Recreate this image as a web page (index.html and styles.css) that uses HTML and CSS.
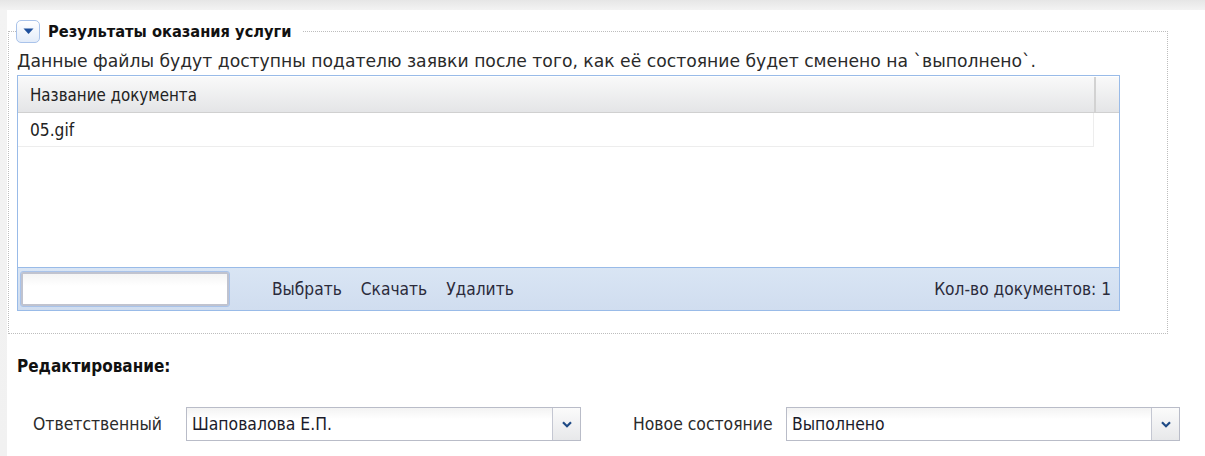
FILE: index.html
```html
<!DOCTYPE html>
<html lang="ru">
<head>
<meta charset="utf-8">
<title>Результаты оказания услуги</title>
<link rel="stylesheet" href="styles.css">
</head>
<body>
<div class="page">
  <fieldset class="results">
    <legend class="results-legend">
      <span class="toggle" aria-hidden="true">
        <svg width="11" height="7" viewBox="0 0 11 7"><path d="M0.5 0.5 H10.5 L5.5 6 Z" fill="#1d4f9c"/></svg>
      </span>
      <span class="legend-title">Результаты оказания услуги</span>
    </legend>
    <p class="note">Данные файлы будут доступны подателю заявки после того, как её состояние будет сменено на `выполнено`.</p>
    <div class="grid">
      <div class="grid-head">
        <div class="grid-col">Название документа</div>
        <div class="grid-filler"></div>
      </div>
      <div class="grid-body">
        <div class="grid-row">05.gif</div>
      </div>
      <div class="grid-toolbar">
        <input class="tb-input" type="text">
        <div class="tb-buttons">
          <span class="tb-btn">Выбрать</span>
          <span class="tb-btn">Скачать</span>
          <span class="tb-btn">Удалить</span>
        </div>
        <span class="tb-count">Кол-во документов: 1</span>
      </div>
    </div>
  </fieldset>

  <h3 class="edit-title">Редактирование:</h3>
  <div class="edit-row">
    <label class="field-label">Ответственный</label>
    <div class="combo combo-first">
      <span class="combo-value">Шаповалова Е.П.</span>
      <span class="combo-trigger">
        <svg width="10" height="7" viewBox="0 0 10 7"><path d="M1 1.2 L5 5.2 L9 1.2" fill="none" stroke="#1e4a86" stroke-width="2.2"/></svg>
      </span>
    </div>
    <label class="field-label field-label-second">Новое состояние</label>
    <div class="combo combo-second">
      <span class="combo-value">Выполнено</span>
      <span class="combo-trigger">
        <svg width="10" height="7" viewBox="0 0 10 7"><path d="M1 1.2 L5 5.2 L9 1.2" fill="none" stroke="#1e4a86" stroke-width="2.2"/></svg>
      </span>
    </div>
  </div>
</div>
</body>
</html>
```

FILE: styles.css
```css
html, body {
  margin: 0;
  padding: 0;
}

body {
  background: linear-gradient(#e6e6e6, #f3f3f3 10px, #f1f1f1);
  font-family: "DejaVu Sans Condensed", "DejaVu Sans", sans-serif;
  color: #1f1f1f;
  height: 456px;
  overflow: hidden;
}

.page {
  margin: 10px 0 0 7px;
  background: #ffffff;
  height: 446px;
  padding-top: 9px;
  box-sizing: border-box;
}

/* collapsible section */
.results {
  box-sizing: border-box;
  width: 1160px;
  margin: 0 0 0 1px;
  padding: 0 47px 22px 8px;
  border: 1px dotted #bdbdbd;
  min-width: 0;
}

.results-legend {
  display: flex;
  align-items: center;
  padding: 0 10px 0 0;
  margin-left: -1px;
  height: 24px;
}

.toggle {
  box-sizing: border-box;
  width: 24px;
  height: 23px;
  border: 1px solid #a9c3ea;
  border-radius: 5px;
  background: linear-gradient(#ffffff, #e3ecf9);
  display: flex;
  align-items: center;
  justify-content: center;
}

.legend-title {
  margin-left: 8px;
  font-family: "DejaVu Sans Condensed", "DejaVu Sans", sans-serif;
  font-weight: bold;
  font-size: 16.3px;
  color: #111;
}

.note {
  margin: 8px 0 4px 0;
  font-family: "DejaVu Sans", sans-serif;
  font-size: 17.2px;
  line-height: 20px;
  color: #2a2a2a;
  white-space: nowrap;
}

/* documents grid */
.grid {
  box-sizing: border-box;
  width: 1103px;
  height: 236px;
  border: 1px solid #99bbe8;
  display: flex;
  flex-direction: column;
  font-size: 17.2px;
}

.grid-head {
  display: flex;
  height: 35px;
  border-top: 1px solid #ffffff;
  border-bottom: 1px solid #d0d0d0;
  background: linear-gradient(#f9f9f9, #e4e5e7);
}

.grid-col {
  flex: 1;
  display: flex;
  align-items: center;
  padding-left: 12px;
  font-size: 16.8px;
  color: #222;
  border-right: 2px solid #d2d2d2;
}

.grid-filler {
  width: 23px;
}

.grid-body {
  flex: 1;
  padding-right: 25px;
}

.grid-row {
  height: 33px;
  border-bottom: 1px solid #ededed;
  border-right: 1px solid #ededed;
  display: flex;
  align-items: center;
  padding-left: 12px;
  color: #222;
}

.grid-toolbar {
  height: 42px;
  border-top: 1px solid #99bbe8;
  background: linear-gradient(#d9e5f4, #d0ddef);
  display: flex;
  align-items: center;
  padding: 0 8px 0 3px;
}

.tb-input {
  box-sizing: border-box;
  width: 208px;
  height: 34px;
  margin: 0;
  border: 2px solid #c0c3cf;
  border-radius: 2px;
  background: linear-gradient(#f4f4f4, #ffffff 40%);
  outline: 1px solid #a9c3ea;
}

.tb-buttons {
  display: flex;
  gap: 19px;
  margin-left: 43px;
}

.tb-btn {
  color: #2b2b3b;
}

.tb-count {
  margin-left: auto;
  color: #2b2b3b;
}

/* edit form */
.edit-title {
  margin: 22px 0 0 10px;
  font-size: 17px;
  font-weight: bold;
  line-height: 20px;
  color: #111;
}

.edit-row {
  display: flex;
  align-items: center;
  margin-top: 31px;
  padding-left: 26px;
  font-size: 17.4px;
}

.field-label {
  width: 153px;
  color: #2b2b2b;
}

.field-label-second {
  margin-left: 52px;
}

.combo {
  box-sizing: border-box;
  height: 34px;
  border: 1px solid #b9bcc8;
  display: flex;
  background: linear-gradient(#f3f3f3, #ffffff 35%);
}

.combo-first {
  width: 395px;
}

.combo-second {
  width: 394px;
}

.combo-value {
  flex: 1;
  display: flex;
  align-items: center;
  padding-left: 5px;
  color: #1b1b2b;
}

.combo-trigger {
  width: 27px;
  border-left: 1px solid #c4c7d2;
  background: linear-gradient(#fbfbfb, #e7e8ea);
  display: flex;
  align-items: center;
  justify-content: center;
}
```
